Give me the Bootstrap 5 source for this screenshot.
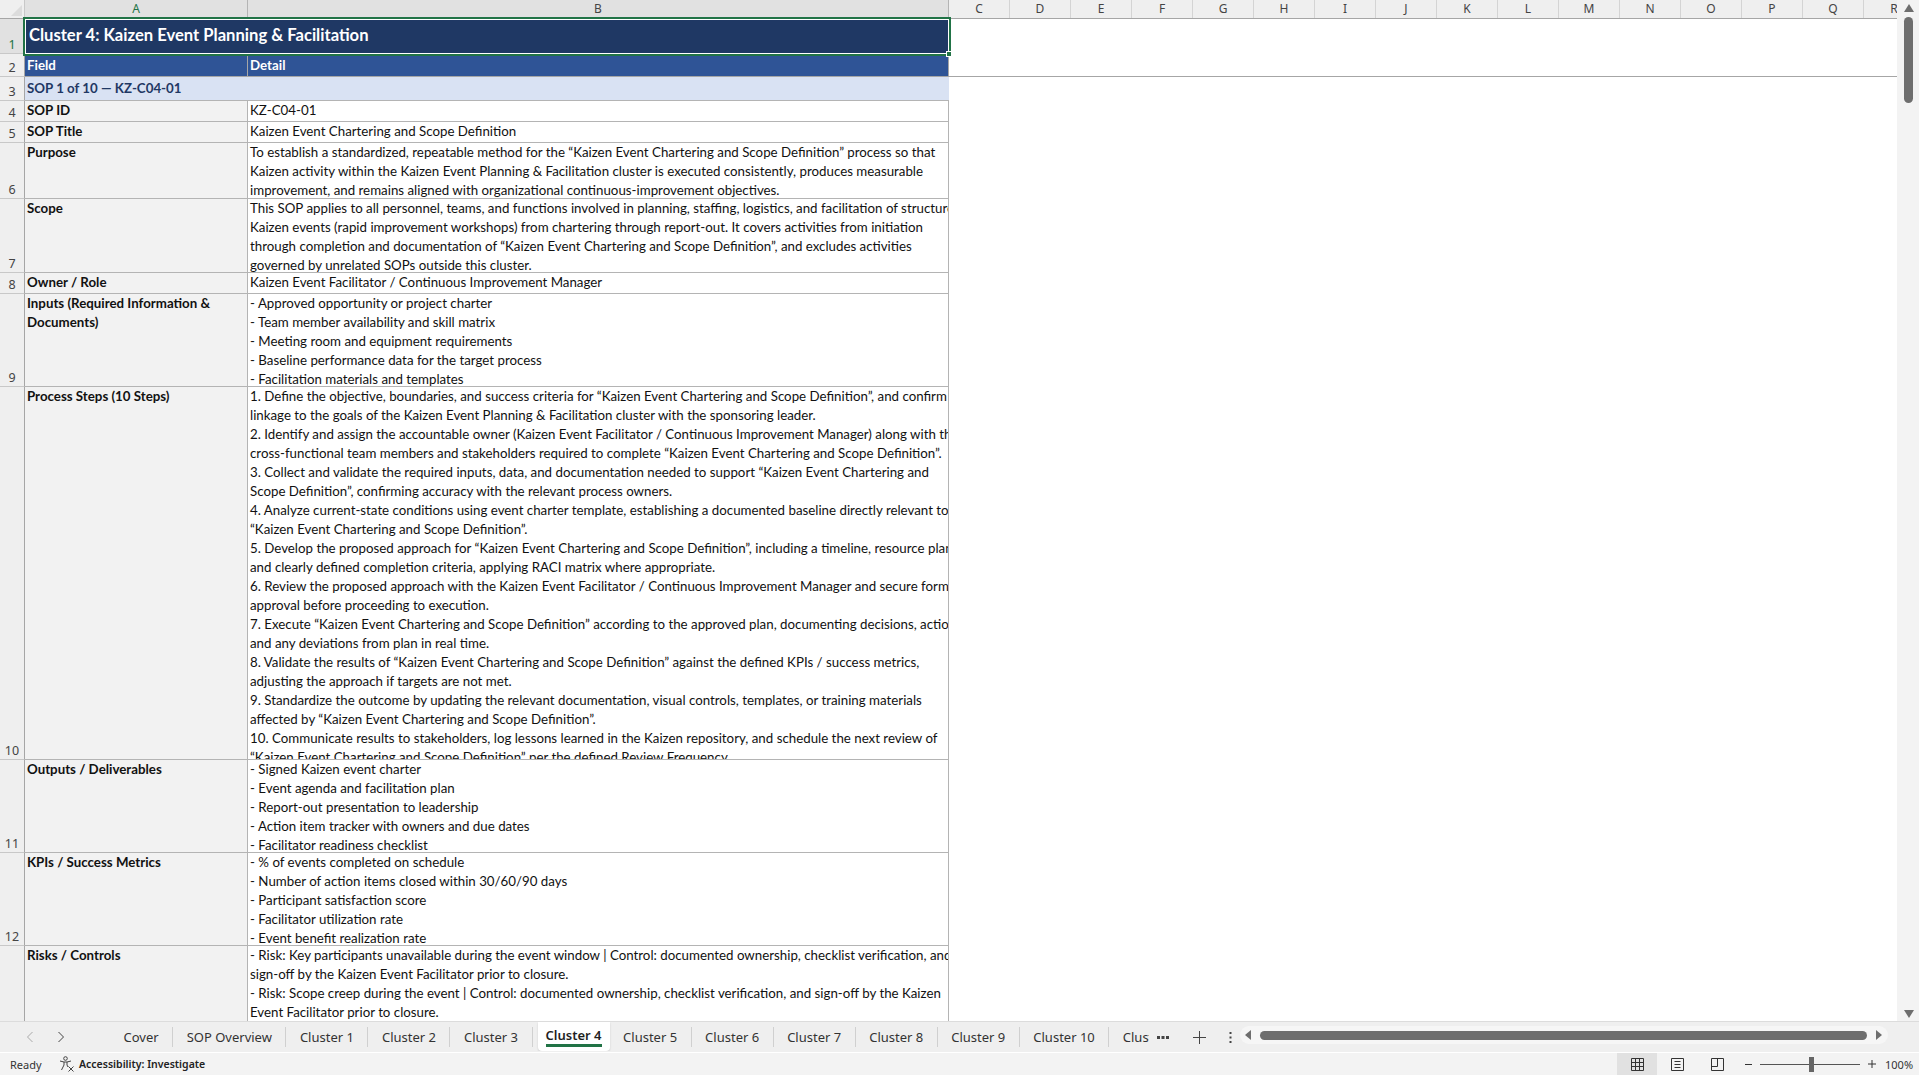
<!DOCTYPE html>
<html lang="en">
<head>
  <meta charset="UTF-8" />
  <title>Cluster 4 - Kaizen SOPs</title>
  <link href="https://cdn.jsdelivr.net/npm/bootstrap@5.3.3/dist/css/bootstrap.min.css" rel="stylesheet" />
  <style>
    html, body { height: 100%; }
    body {
      height: 1075px;
      overflow: hidden;
      background: #f3f3f3;
      color: #111;
      font-family: Lato, "Liberation Sans", sans-serif;
      font-size: 13.3px;
      line-height: 19px;
    }
    /* sheet */
    .sheet-wrap { height: 1021px; }
    .sheet-area { width: 1897px; overflow: hidden; background: #fff; }
    .col-heads { height: 19px; background: #efefef; border-bottom: 1px solid #a6a6a6; }
    .col-corner { width: 25px; flex: none; position: relative; border-right: 1px solid #c8c8c8; }
    .col-corner::after {
      content: ""; position: absolute; right: 2px; bottom: 2px;
      border-style: solid; border-width: 0 0 11px 11px;
      border-color: transparent transparent #dcdcdc transparent;
    }
    .col-head {
      flex: none; width: 61px; text-align: center; color: #444;
      font-family: "Noto Sans", sans-serif; font-size: 12px; line-height: 18px;
      border-right: 1px solid #d4d4d4;
    }
    .col-head.is-sel { background: #e1e1e1; border-right-color: #b4b4b4; }
    .col-a { width: 223px; color: #217346; }
    .col-b { width: 701px; }
    .sheet-grid {
      display: grid;
      grid-template-columns: 25px 223px 701px 1fr;
      grid-template-rows: 35px 23px 24px 21px 21px 56px 74px 21px 93px 373px 93px 93px 76px;
    }
    .row-head {
      background: #efefef; color: #444; text-align: center;
      font-family: "Noto Sans", sans-serif; font-size: 12.5px; line-height: 17px;
      display: flex; align-items: flex-end; justify-content: center;
      border-right: 1px solid #a6a6a6; border-bottom: 1px solid #c8c8c8;
    }
    .row-head.is-sel { background: #e1e1e1; color: #217346; }
    .xl-cell {
      overflow: hidden; white-space: nowrap; padding-left: 2px;
      border-right: 1px solid #b4b4b4; border-bottom: 1px solid #b4b4b4;
    }
    .xl-label { background: #f2f2f2; font-weight: 700; padding-left: 2px; }
    .xl-title {
      grid-column: 2 / 4; position: relative; overflow: visible;
      background: #1f3864; color: #fff; font-weight: 700; font-size: 16.6px; line-height: 33px;
      padding-left: 4px; border: 0;
      outline: 2px solid #217346; outline-offset: 0; box-shadow: inset 0 0 0 1px #fff;
      z-index: 2;
    }
    .xl-title::after {
      content: ""; position: absolute; right: -3px; bottom: -3px; width: 6px; height: 6px;
      background: #217346; border: 1px solid #fff;
    }
    .xl-head { background: #2f5496; color: #fff; font-weight: 700; border-color: #a6a6a6; line-height: 22px; }
    .xl-section { grid-column: 2 / 4; background: #d9e2f3; color: #1f3864; font-weight: 700; line-height: 23px; border-right: 0; }
    .xl-empty-top { grid-column: 4; grid-row: 1 / 3; border-bottom: 1px solid #a6a6a6; }
    /* vertical scrollbar */
    .vbar { flex: 1; background: #f3f3f3; position: relative; }
    .vbar-thumb { position: absolute; left: 7px; top: 17px; width: 9px; height: 86px; border-radius: 5px; background: #6e6e6e; }
    .vbar-up, .vbar-down { position: absolute; left: 7px; width: 10px; height: 8px; }
    .vbar-up { top: 4px; }
    .vbar-down { top: 1010px; }
    /* tabs */
    .tab-bar { height: 31px; background: #efefef; border-top: 1px solid #dcdcdc; }
    .tab-arrows { width: 110px; flex: none; padding-left: 26px; gap: 23px; }
    .tab-strip { width: 1039px; flex: none; overflow: hidden; }
    .xl-tab {
      position: relative; height: 29px; padding: 0 13.5px; color: #333;
      font-family: "Noto Sans", sans-serif; font-size: 13px; line-height: 31px; white-space: nowrap;
    }
    .xl-tab:hover { color: #333; }
    .xl-sep { width: 1px; height: 20px; margin-top: 5px; background: #d0d0d0; flex: none; }
    .xl-tab.is-active {
      background: #fff; color: #1f1f1f; font-weight: 600; padding: 0 8px; line-height: 26px; margin: 0 0 0 5px;
      border-radius: 0 0 4px 4px; box-shadow: 0 1px 2px rgba(0, 0, 0, .15);
    }
    .xl-tab.is-active::after {
      content: ""; position: absolute; left: 8px; right: 8px; bottom: 4px; height: 3px; background: #217346;
    }
    .tab-tools { width: 91px; flex: none; padding-left: 8px; }
    .hbar { width: 648px; height: 18px; flex: none; border-radius: 9px; background: #f6f6f6; gap: 0; padding: 0 5px; }
    .hbar-thumb { width: 607px; height: 9px; margin: 0 9px; border-radius: 5px; background: #6e6e6e; flex: none; }
    /* status */
    .status-bar {
      height: 23px; background: #f3f3f3; border-top: 1px solid #fff;
      font-family: "Noto Sans", sans-serif; font-size: 11px; color: #333;
    }
    .status-ready { width: 51px; padding-left: 10px; flex: none; }
    .status-acc { font-weight: 600; font-size: 10.5px; color: #222; }
    .view-btn { width: 40px; height: 22px; flex: none; }
    .view-btn.is-on { background: #e1e1e1; }
    .zoom-track { width: 100px; height: 1px; background: #555; position: relative; flex: none; }
    .zoom-thumb { position: absolute; left: 49px; top: -7px; width: 5px; height: 15px; background: #666; }
    .zoom-pct { width: 35px; text-align: left; padding-left: 1px; flex: none; }
  </style>
</head>
<body class="d-flex flex-column">

  <div class="sheet-wrap d-flex">
    <div class="sheet-area">
      <div class="col-heads d-flex">
        <div class="col-corner"></div>
        <div class="col-head is-sel col-a">A</div>
        <div class="col-head is-sel col-b">B</div>
        <div class="col-head">C</div><div class="col-head">D</div><div class="col-head">E</div><div class="col-head">F</div>
        <div class="col-head">G</div><div class="col-head">H</div><div class="col-head">I</div><div class="col-head">J</div>
        <div class="col-head">K</div><div class="col-head">L</div><div class="col-head">M</div><div class="col-head">N</div>
        <div class="col-head">O</div><div class="col-head">P</div><div class="col-head">Q</div><div class="col-head">R</div>
      </div>

      <div class="sheet-grid">
        <div class="xl-empty-top"></div>

        <div class="row-head is-sel">1</div>
        <div class="xl-cell xl-title">Cluster 4: Kaizen Event Planning &amp; Facilitation</div>

        <div class="row-head">2</div>
        <div class="xl-cell xl-head">Field</div>
        <div class="xl-cell xl-head">Detail</div>

        <div class="row-head">3</div>
        <div class="xl-cell xl-section" style="grid-column: 2 / 4">SOP 1 of 10 — KZ-C04-01</div>
        <div></div>

        <div class="row-head">4</div>
        <div class="xl-cell xl-label">SOP ID</div>
        <div class="xl-cell">KZ-C04-01</div>
        <div></div>

        <div class="row-head">5</div>
        <div class="xl-cell xl-label">SOP Title</div>
        <div class="xl-cell">Kaizen Event Chartering and Scope Definition</div>
        <div></div>

        <div class="row-head">6</div>
        <div class="xl-cell xl-label">Purpose</div>
        <div class="xl-cell">To establish a standardized, repeatable method for the “Kaizen Event Chartering and Scope Definition” process so that<br>Kaizen activity within the Kaizen Event Planning &amp; Facilitation cluster is executed consistently, produces measurable<br>improvement, and remains aligned with organizational continuous-improvement objectives.</div>
        <div></div>

        <div class="row-head">7</div>
        <div class="xl-cell xl-label">Scope</div>
        <div class="xl-cell">This SOP applies to all personnel, teams, and functions involved in planning, staffing, logistics, and facilitation of structured<br>Kaizen events (rapid improvement workshops) from chartering through report-out. It covers activities from initiation<br>through completion and documentation of “Kaizen Event Chartering and Scope Definition”, and excludes activities<br>governed by unrelated SOPs outside this cluster.</div>
        <div></div>

        <div class="row-head">8</div>
        <div class="xl-cell xl-label">Owner / Role</div>
        <div class="xl-cell">Kaizen Event Facilitator / Continuous Improvement Manager</div>
        <div></div>

        <div class="row-head">9</div>
        <div class="xl-cell xl-label">Inputs (Required Information &amp;<br>Documents)</div>
        <div class="xl-cell">- Approved opportunity or project charter<br>- Team member availability and skill matrix<br>- Meeting room and equipment requirements<br>- Baseline performance data for the target process<br>- Facilitation materials and templates</div>
        <div></div>

        <div class="row-head">10</div>
        <div class="xl-cell xl-label">Process Steps (10 Steps)</div>
        <div class="xl-cell">1. Define the objective, boundaries, and success criteria for “Kaizen Event Chartering and Scope Definition”, and confirm<br>linkage to the goals of the Kaizen Event Planning &amp; Facilitation cluster with the sponsoring leader.<br>2. Identify and assign the accountable owner (Kaizen Event Facilitator / Continuous Improvement Manager) along with the<br>cross-functional team members and stakeholders required to complete “Kaizen Event Chartering and Scope Definition”.<br>3. Collect and validate the required inputs, data, and documentation needed to support “Kaizen Event Chartering and<br>Scope Definition”, confirming accuracy with the relevant process owners.<br>4. Analyze current-state conditions using event charter template, establishing a documented baseline directly relevant to<br>“Kaizen Event Chartering and Scope Definition”.<br>5. Develop the proposed approach for “Kaizen Event Chartering and Scope Definition”, including a timeline, resource plan,<br>and clearly defined completion criteria, applying RACI matrix where appropriate.<br>6. Review the proposed approach with the Kaizen Event Facilitator / Continuous Improvement Manager and secure formal<br>approval before proceeding to execution.<br>7. Execute “Kaizen Event Chartering and Scope Definition” according to the approved plan, documenting decisions, actions,<br>and any deviations from plan in real time.<br>8. Validate the results of “Kaizen Event Chartering and Scope Definition” against the defined KPIs / success metrics,<br>adjusting the approach if targets are not met.<br>9. Standardize the outcome by updating the relevant documentation, visual controls, templates, or training materials<br>affected by “Kaizen Event Chartering and Scope Definition”.<br>10. Communicate results to stakeholders, log lessons learned in the Kaizen repository, and schedule the next review of<br>“Kaizen Event Chartering and Scope Definition” per the defined Review Frequency.</div>
        <div></div>

        <div class="row-head">11</div>
        <div class="xl-cell xl-label">Outputs / Deliverables</div>
        <div class="xl-cell">- Signed Kaizen event charter<br>- Event agenda and facilitation plan<br>- Report-out presentation to leadership<br>- Action item tracker with owners and due dates<br>- Facilitator readiness checklist</div>
        <div></div>

        <div class="row-head">12</div>
        <div class="xl-cell xl-label">KPIs / Success Metrics</div>
        <div class="xl-cell">- % of events completed on schedule<br>- Number of action items closed within 30/60/90 days<br>- Participant satisfaction score<br>- Facilitator utilization rate<br>- Event benefit realization rate</div>
        <div></div>

        <div class="row-head border-bottom-0"></div>
        <div class="xl-cell xl-label border-bottom-0">Risks / Controls</div>
        <div class="xl-cell border-bottom-0">- Risk: Key participants unavailable during the event window | Control: documented ownership, checklist verification, and<br>sign-off by the Kaizen Event Facilitator prior to closure.<br>- Risk: Scope creep during the event | Control: documented ownership, checklist verification, and sign-off by the Kaizen<br>Event Facilitator prior to closure.</div>
        <div></div>
      </div>
    </div>

    <div class="vbar">
      <svg class="vbar-up" viewBox="0 0 10 8"><path d="M5 0 10 8H0z" fill="#6e6e6e"/></svg>
      <div class="vbar-thumb"></div>
      <svg class="vbar-down" viewBox="0 0 10 8"><path d="M0 0H10L5 8z" fill="#6e6e6e"/></svg>
    </div>
  </div>

  <div class="tab-bar d-flex align-items-start">
    <div class="tab-arrows d-flex align-items-center h-100">
      <svg width="8" height="12" viewBox="0 0 8 12"><path d="M6.5 1 1.5 6l5 5" fill="none" stroke="#aaa" stroke-width="1"/></svg>
      <svg width="8" height="12" viewBox="0 0 8 12"><path d="M1.5 1l5 5-5 5" fill="none" stroke="#444" stroke-width="1"/></svg>
    </div>
    <ul class="nav flex-nowrap tab-strip">
      <li><a class="xl-tab d-block text-decoration-none" href="#">Cover</a></li><li class="xl-sep"></li>
      <li><a class="xl-tab d-block text-decoration-none" href="#">SOP Overview</a></li><li class="xl-sep"></li>
      <li><a class="xl-tab d-block text-decoration-none" href="#">Cluster 1</a></li><li class="xl-sep"></li>
      <li><a class="xl-tab d-block text-decoration-none" href="#">Cluster 2</a></li><li class="xl-sep"></li>
      <li><a class="xl-tab d-block text-decoration-none" href="#">Cluster 3</a></li><li class="xl-sep"></li>
      <li><a class="xl-tab is-active d-block text-decoration-none" href="#">Cluster 4</a></li>
      <li><a class="xl-tab d-block text-decoration-none" href="#">Cluster 5</a></li><li class="xl-sep"></li>
      <li><a class="xl-tab d-block text-decoration-none" href="#">Cluster 6</a></li><li class="xl-sep"></li>
      <li><a class="xl-tab d-block text-decoration-none" href="#">Cluster 7</a></li><li class="xl-sep"></li>
      <li><a class="xl-tab d-block text-decoration-none" href="#">Cluster 8</a></li><li class="xl-sep"></li>
      <li><a class="xl-tab d-block text-decoration-none" href="#">Cluster 9</a></li><li class="xl-sep"></li>
      <li><a class="xl-tab d-block text-decoration-none" href="#">Cluster 10</a></li><li class="xl-sep"></li>
      <li><a class="xl-tab d-block text-decoration-none" href="#">Cluster 11</a></li>
    </ul>
    <div class="tab-tools d-flex align-items-center justify-content-between h-100 pe-2">
      <svg width="12" height="4" viewBox="0 0 12 4"><g fill="#444"><rect x="0" y="1" width="3" height="3"/><rect x="4.5" y="1" width="3" height="3"/><rect x="9" y="1" width="3" height="3"/></g></svg>
      <svg width="13" height="13" viewBox="0 0 13 13"><path d="M6.5 0v13M0 6.5h13" stroke="#444" stroke-width="1"/></svg>
      <svg width="3" height="13" viewBox="0 0 3 13"><g fill="#444"><rect x="0.5" y="1" width="2" height="2"/><rect x="0.5" y="5.5" width="2" height="2"/><rect x="0.5" y="10" width="2" height="2"/></g></svg>
    </div>
    <div class="hbar d-flex align-items-center mt-1">
      <svg width="6" height="10" viewBox="0 0 6 10" class="flex-none"><path d="M6 0v10L0 5z" fill="#6e6e6e"/></svg>
      <div class="hbar-thumb"></div>
      <svg width="6" height="10" viewBox="0 0 6 10" class="flex-none"><path d="M0 0v10l6-5z" fill="#6e6e6e"/></svg>
    </div>
  </div>

  <div class="status-bar d-flex align-items-center">
    <div class="status-ready">Ready</div>
    <svg class="ms-2 me-1" width="16" height="16" viewBox="0 0 16 16" fill="none" stroke="#444" stroke-width="1"><circle cx="6.5" cy="2.5" r="1.8"/><path d="M1 5l4 1h3l4-1M5 6v3L2.5 14M8 6v3l1 2"/><path d="M9.5 10.5l5 5M14.5 10.5l-5 5"/></svg>
    <div class="status-acc">Accessibility: Investigate</div>
    <div class="ms-auto d-flex align-items-center">
      <div class="view-btn is-on d-flex align-items-center justify-content-center">
        <svg width="13" height="13" viewBox="0 0 13 13" fill="none" stroke="#333"><path d="M.5.5h12v12H.5zM4.5.5v12M8.5.5v12M.5 4.5h12M.5 8.5h12"/></svg>
      </div>
      <div class="view-btn d-flex align-items-center justify-content-center">
        <svg width="13" height="13" viewBox="0 0 13 13" fill="none" stroke="#333"><path d="M.5.5h12v12H.5zM3.5 3.5h6M3.5 6.5h6M3.5 9.5h6"/></svg>
      </div>
      <div class="view-btn d-flex align-items-center justify-content-center">
        <svg width="13" height="13" viewBox="0 0 13 13" fill="none" stroke="#333"><path d="M.5.5h12v12H.5zM.5 8.5H6.5V.5"/></svg>
      </div>
      <svg class="ms-2" width="7" height="3" viewBox="0 0 7 3"><path d="M0 1.5h7" stroke="#333"/></svg>
      <div class="zoom-track mx-2"><div class="zoom-thumb"></div></div>
      <svg class="me-2" width="8" height="8" viewBox="0 0 8 8"><path d="M4 0v8M0 4h8" stroke="#333"/></svg>
      <div class="zoom-pct">100%</div>
    </div>
  </div>

  <script src="https://cdn.jsdelivr.net/npm/bootstrap@5.3.3/dist/js/bootstrap.bundle.min.js"></script>
</body>
</html>
